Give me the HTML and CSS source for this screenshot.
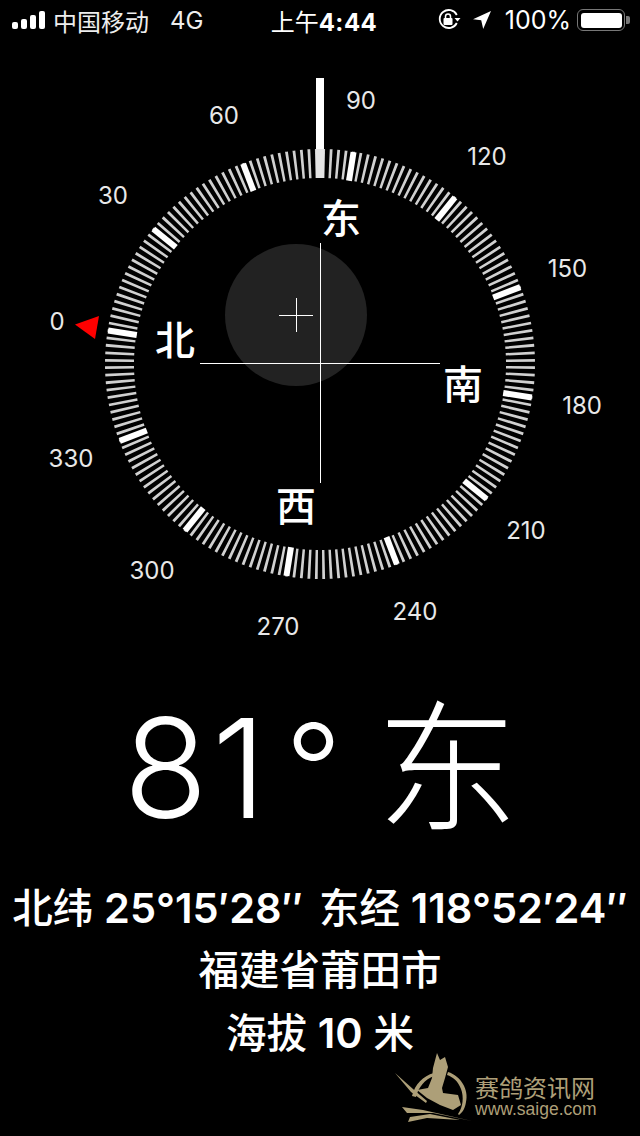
FILE: index.html
```html
<!DOCTYPE html>
<html lang="zh">
<head>
<meta charset="utf-8">
<title>指南针</title>
<link rel="stylesheet" href="styles.css">
</head>
<body>
<div class="screen">
  <header class="status">
    <div class="status-left">
      <svg class="signal" width="34" height="18" viewBox="0 0 34 18"><rect x="0" y="11" width="6" height="7" rx="2"/><rect x="9" y="8" width="6" height="10" rx="2"/><rect x="18" y="4" width="6" height="14" rx="2"/><rect x="27" y="0" width="6" height="18" rx="2"/></svg>
      <span class="carrier">中国移动</span>
      <span class="net">4G</span>
    </div>
    <div class="status-center"><span>上午</span><b>4:44</b></div>
    <div class="status-right">
      <svg class="lock" width="24" height="24" viewBox="0 0 24 24"><path d="M19.800 15A9 9 0 1 1 19.800 7" fill="none" stroke="#fff" stroke-width="1.800"/><path d="M17.500 10h6l-3 3.600z" fill="#fff"/><rect x="6.500" y="10" width="9" height="7" rx="1" fill="#fff"/><path d="M8.500 10V8.400a2.500 2.500 0 0 1 5 0V10" fill="none" stroke="#fff" stroke-width="1.500"/></svg>
      <svg class="arrow" width="20" height="20" viewBox="0 0 20 20"><path d="M19 1 1 9.300l8.200.900 2 8.800z" fill="#fff"/></svg>
      <span class="pct">100%</span>
      <div class="battery"><div class="battery-fill"></div></div>
      <div class="battery-cap"></div>
    </div>
  </header>

  <section class="dial">
    <svg class="dial-svg" width="640" height="620" viewBox="0 0 640 620">
      <circle cx="296" cy="255" r="71" fill="#222"/>
      <circle class="ticks" cx="320" cy="304" r="200.500" pathLength="360" transform="rotate(-90 320 304)"/>
      <g class="majors" transform="rotate(-81 320 304)">
        <path d="M320 89.500V118.500"/>
        <path d="M320 89.500V118.500" transform="rotate(30 320 304)"/>
        <path d="M320 89.500V118.500" transform="rotate(60 320 304)"/>
        <path d="M320 89.500V118.500" transform="rotate(90 320 304)"/>
        <path d="M320 89.500V118.500" transform="rotate(120 320 304)"/>
        <path d="M320 89.500V118.500" transform="rotate(150 320 304)"/>
        <path d="M320 89.500V118.500" transform="rotate(180 320 304)"/>
        <path d="M320 89.500V118.500" transform="rotate(210 320 304)"/>
        <path d="M320 89.500V118.500" transform="rotate(240 320 304)"/>
        <path d="M320 89.500V118.500" transform="rotate(270 320 304)"/>
        <path d="M320 89.500V118.500" transform="rotate(300 320 304)"/>
        <path d="M320 89.500V118.500" transform="rotate(330 320 304)"/>
      </g>
      <rect x="316" y="18" width="8" height="71" fill="#fff"/>
      <rect x="316" y="89" width="8" height="29" fill="#e4e4e4"/>
      <path class="hair" d="M320.500 183V423M200 303.500H440M296.500 238V272M279 255.500H313"/>
      <path d="M99 256 75 264.500 95 279z" fill="#f00"/>
      <g class="nums">
        <text x="57" y="270">0</text>
        <text x="113" y="144">30</text>
        <text x="224" y="64">60</text>
        <text x="361" y="49">90</text>
        <text x="487" y="105">120</text>
        <text x="567.500" y="217">150</text>
        <text x="582" y="354">180</text>
        <text x="526" y="479">210</text>
        <text x="415" y="560">240</text>
        <text x="278" y="575">270</text>
        <text x="152" y="519">300</text>
        <text x="71" y="407">330</text>
      </g>
      <g class="dirs">
        <text x="341" y="173">东</text>
        <text x="463" y="339">南</text>
        <text x="296" y="461">西</text>
        <text x="175" y="295">北</text>
      </g>
    </svg>
  </section>

  <section class="readout">
    <h1 class="heading"><span class="deg">81</span><span class="sym">°</span> <span class="dir">东</span></h1>
    <p class="line coords"><span>北纬 <span class="num">25°15′28″</span></span><span>东经 <span class="num">118°52′24″</span></span></p>
    <p class="line">福建省莆田市</p>
    <p class="line">海拔 <span class="num">10</span> 米</p>
  </section>

  <div class="logo">
    <svg width="82" height="72" viewBox="0 0 82 72">
      <path class="gold" d="M19 44C22 32 30 24 41 21V24C32 27 25 36 23 45zM55 20C68 24 76 38 73 50 72 56 70 60 66 63L65 62C70 55 71 45 68 37 65 29 60 25 54 23z"/>
      <path class="gold" d="M2 21 20 37 34 49 33 51 18 40z"/>
      <path class="gold" d="M44 1 47 8 52 5 55 15 52 26 49 36 50 41 65 43 68 53 60 58 47 53 34 46 24 38 35 36 39 26 40 16z"/>
      <path class="gold" d="M9 55 30 58 79 69 40 61 14 61z"/>
      <path class="gold" d="M15 70 17 65 37 62 67 68 34 66z"/>
    </svg>
    <div class="logo-text"><div class="logo-cn">赛鸽资讯网</div><div class="logo-en">www.saige.com</div></div>
  </div>
</div>
</body>
</html>
```
FILE: styles.css
```css
* { box-sizing: border-box; margin: 0; padding: 0; }
html, body { background: #000; }
body { width: 640px; height: 1136px; overflow: hidden; color: #fff; font-family: Inter, "Noto Sans CJK SC", sans-serif; }
.screen { position: relative; width: 640px; height: 1136px; }

.status { display: grid; grid-template-columns: 1fr auto 1fr; align-items: center; height: 40px; padding: 0 10px 0 12px; font-size: 24px; }
.status-left { display: flex; align-items: center; }
.signal { fill: #fff; margin-right: 7px; }
.carrier { font-size: 24px; color: #eee; }
.net { margin-left: 21px; font-size: 24px; color: #eee; }
.status-center { margin-left: 6px; font-size: 24px; }
.status-center b { font-weight: 700; letter-spacing: 0.500px; }
.status-right { display: flex; align-items: center; justify-content: flex-end; }
.lock { margin-right: 11px; }
.arrow { margin-right: 13px; }
.pct { margin-right: 6px; font-size: 25px; }
.battery { width: 48px; height: 22px; padding: 2.500px; border: 1.500px solid #777; border-radius: 6px; }
.battery-fill { height: 100%; background: #fff; border-radius: 3px; }
.battery-cap { width: 4px; height: 8px; margin-left: 1px; background: #777; border-radius: 0 2px 2px 0; }

.dial { height: 620px; margin-top: 20px; }
.dial-svg { display: block; }
.ticks { fill: none; stroke: #d0d0d0; stroke-width: 29px; stroke-dasharray: 0.75 1.25; stroke-dashoffset: -0.625; }
.majors path { fill: none; stroke: #fff; stroke-width: 6px; }
.hair { fill: none; stroke: #fff; stroke-width: 1px; }
.nums text { fill: #e8e8e8; font-size: 24px; text-anchor: middle; }
.dirs text { fill: #fff; font-size: 40px; text-anchor: middle; font-family: "Noto Sans CJK SC", sans-serif; font-weight: 500; }

.readout { display: flex; flex-direction: column; align-items: center; margin-top: 3px; }
.heading { margin-left: 2px; font-size: 138px; line-height: 170px; font-weight: 300; white-space: nowrap; word-spacing: -4px; }
.deg { letter-spacing: 4px; }
.sym { margin-left: 15px; font-size: 124px; vertical-align: 5px; }
.dir { font-size: 142px; vertical-align: -2px; }
.line { font-size: 40.500px; line-height: 62px; font-weight: 500; white-space: nowrap; }
.num { font-size: 41.500px; font-weight: 600; }
.coords { display: flex; gap: 16px; margin-top: 24px; }

.logo { position: absolute; left: 393px; top: 1052px; display: flex; align-items: flex-start; color: #ad9f78; }
.gold { fill: #ad9f78; }
.logo-text { margin: 25px 0 0 0; }
.logo-cn { font-family: "Liberation Sans", "Noto Sans CJK SC", sans-serif; font-size: 24px; line-height: 24px; }
.logo-en { font-family: "Liberation Sans", sans-serif; font-size: 17.500px; line-height: 17px; }
```
